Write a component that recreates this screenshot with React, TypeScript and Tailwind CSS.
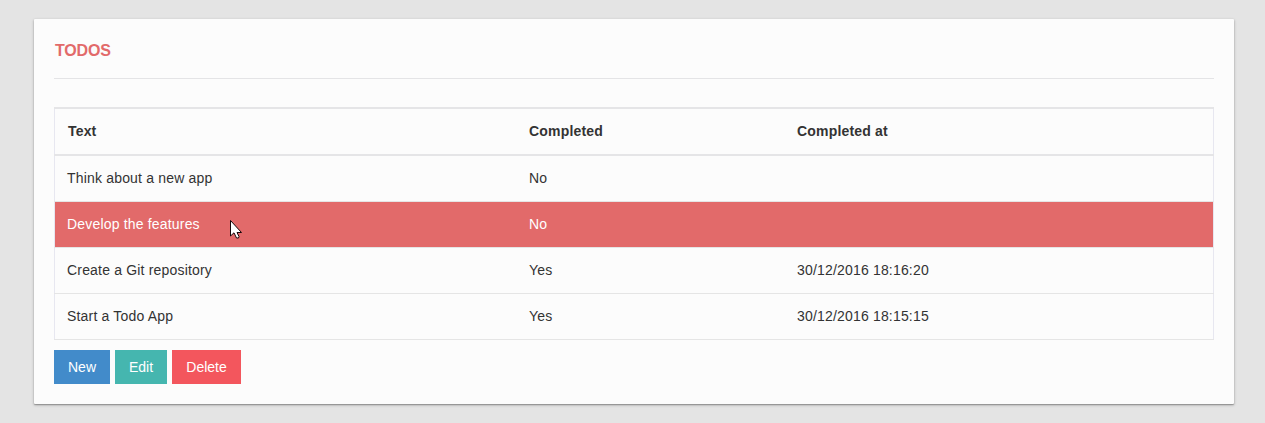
const rows = [
  { text: "Think about a new app", completed: "No", at: "", selected: false },
  { text: "Develop the features", completed: "No", at: "", selected: true },
  { text: "Create a Git repository", completed: "Yes", at: "30/12/2016 18:16:20", selected: false },
  { text: "Start a Todo App", completed: "Yes", at: "30/12/2016 18:15:15", selected: false },
];

function Cursor() {
  return (
    <svg className="absolute left-[230px] top-[219px]" width="13" height="21" viewBox="0 0 13 21">
      <path d="M.5 1.5v15.500l3.500-3.200 2.500 5.200h2l.5-1.500-2-4h4.500z" fill="#fff" stroke="#16060a" />
    </svg>
  );
}

export default function App() {
  return (
    <div className="relative h-[423px] bg-[#e4e4e4] pt-[19px] pr-[31px] pl-[34px] font-['Liberation_Sans',Arial,sans-serif] text-sm text-[#333]">
      <main className="h-[385px] rounded-[1px] bg-[#fcfcfc] px-5 pt-5 shadow-[0_1px_3px_rgba(0,0,0,0.3),0_1px_1px_rgba(0,0,0,0.2)]">
        <h1 className="h-10 border-b border-[#e4e4e6] pl-px text-base leading-[23px] font-bold tracking-[-0.2px] text-[#e26a6a]">TODOS</h1>
        <table className="mt-7 w-full table-fixed border-collapse border border-[#e7e7f0] text-left leading-5 tracking-[0.18px]">
          <colgroup>
            <col className="w-[462px]" />
            <col className="w-[268px]" />
            <col />
          </colgroup>
          <thead>
            <tr className="h-[47px] border-y-2 border-[#e5e5e7]">
              <th className="pr-3 pb-0.5 pl-[13px]">Text</th>
              <th className="pr-3 pb-0.5 pl-[12.5px]">Completed</th>
              <th className="pr-3 pb-0.5 pl-[12.5px]">Completed at</th>
            </tr>
          </thead>
          <tbody>
            {rows.map((row) => (
              <tr key={row.text} className={row.selected ? "h-[46px] border-b border-[#e5e5e5] bg-[#e26a6a] text-white" : "h-[46px] border-b border-[#e5e5e5]"}>
                <td className="px-3">{row.text}</td>
                <td className="pr-3 pl-[12.5px]">{row.completed}</td>
                <td className="pr-3 pl-[12.5px]">{row.at}</td>
              </tr>
            ))}
          </tbody>
        </table>
        <div className="mt-2.5 flex gap-[5px] text-white">
          <button className="h-[34px] w-14 bg-[#428bca]">New</button>
          <button className="h-[34px] w-[52px] bg-[#45b6af]">Edit</button>
          <button className="h-[34px] w-[69px] bg-[#f3565d]">Delete</button>
        </div>
      </main>
      <Cursor />
    </div>
  );
}
